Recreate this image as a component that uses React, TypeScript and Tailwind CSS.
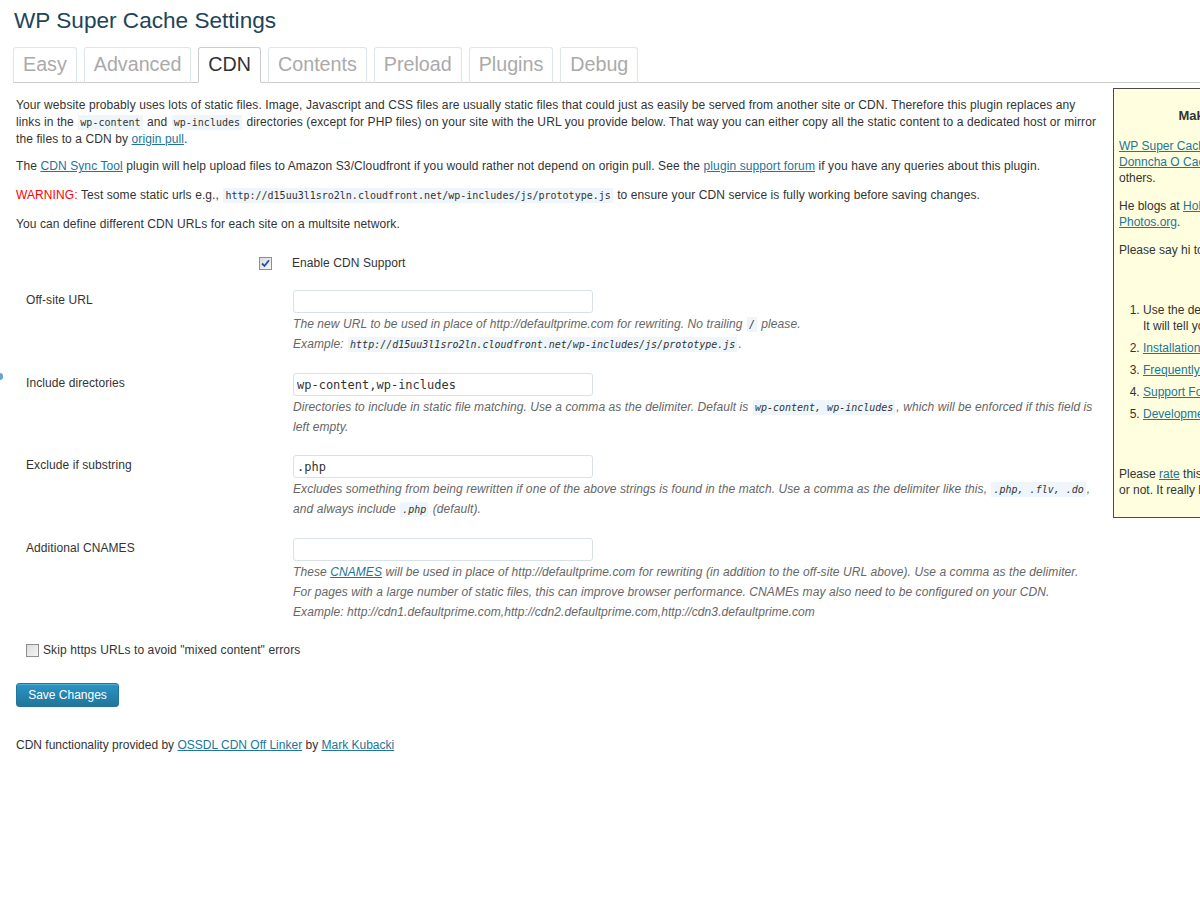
import React from "react";

const Code = ({ children, italic = false }: { children: React.ReactNode; italic?: boolean }) => (
  <code
    className={`font-['DejaVu_Sans_Mono','Liberation_Mono',monospace] text-[10px] leading-[10px] tracking-normal bg-[#eef6fb] px-[2px] py-[2px] mx-[1px] text-[#333] ${italic ? "italic" : ""}`}
  >
    {children}
  </code>
);

const A = ({ children }: { children: React.ReactNode }) => (
  <a href="#" className="text-[#21759b] underline">
    {children}
  </a>
);

const Check = ({ checked }: { checked: boolean }) => (
  <span className="inline-flex w-[13px] h-[13px] border border-[#8e8f8f] bg-gradient-to-br from-[#dcdcdc] to-[#f6f6f6] items-center justify-center shrink-0">
    {checked && (
      <svg width="9" height="9" viewBox="0 0 9 9">
        <path d="M1 4.5 L3.5 7 L8 1.2" fill="none" stroke="#2a4fa8" strokeWidth="1.8" />
      </svg>
    )}
  </span>
);

const tabs = ["Easy", "Advanced", "CDN", "Contents", "Preload", "Plugins", "Debug"];

const inputCls =
  "block w-[300px] h-[23px] border border-[#d6e1e9] rounded-[3px] px-[3px] bg-white text-[12px] tracking-normal text-[#333] font-['DejaVu_Sans_Mono','Liberation_Mono',monospace] outline-none";

export default function App() {
  return (
    <div className="relative w-[1200px] h-[900px] overflow-hidden bg-white text-[12px] text-[#333] font-['Liberation_Sans',Arial,sans-serif]">
      <span className="absolute left-[-3px] top-[373px] w-[6px] h-[7px] rounded-full bg-[#6aa3cf]" />
      <div className="pl-[14px] pt-[6px]">
        <h2 className="text-[22.6px] leading-[29px] text-[#214459]">WP Super Cache Settings</h2>
      </div>
      <div className="mt-[12px] ml-[13px] flex gap-[7px] border-b border-[#cccccc]">
        {tabs.map((t) => (
          <div
            key={t}
            className={`-mb-px px-[9px] pt-[4px] pb-[6px] text-[19.7px] leading-[24px] border rounded-t-[3px] ${
              t === "CDN"
                ? "text-[#333] border-[#cccccc] border-b-white bg-white"
                : "text-[#aaaaaa] border-[#dbe6ee] border-b-[#cccccc]"
            }`}
          >
            {t}
          </div>
        ))}
      </div>

      <div className="flex pl-[16px]">
        <div className="w-[1087px] shrink-0 leading-[17px] tracking-[0.1px]">
          <p className="mt-[14px]">
            Your website probably uses lots of static files. Image, Javascript and CSS files are usually static files that
            could just as easily be served from another site or CDN. Therefore this plugin replaces any links in the{" "}
            <Code>wp-content</Code> and <Code>wp-includes</Code> directories (except for PHP files) on your site with the URL
            you provide below. That way you can either copy all the static content to a dedicated host or mirror the files to
            a CDN by <A>origin pull</A>.
          </p>
          <p className="mt-[10px]">
            The <A>CDN Sync Tool</A> plugin will help upload files to Amazon S3/Cloudfront if you would rather not depend on
            origin pull. See the <A>plugin support forum</A> if you have any queries about this plugin.
          </p>
          <p className="mt-[12px]">
            <span className="text-[#ff0000]">WARNING:</span> Test some static urls e.g.,{" "}
            <Code>http://d15uu3l1sro2ln.cloudfront.net/wp-includes/js/prototype.js</Code> to ensure your CDN service is fully
            working before saving changes.
          </p>
          <p className="mt-[12px]">You can define different CDN URLs for each site on a multsite network.</p>

          <div className="mt-[13px] tracking-[0.08px]">
            <div className="flex h-[34px] items-center">
              <div className="w-[267px] flex justify-end pr-[11px]">
                <Check checked />
              </div>
              <div className="pl-[9px] leading-[16px]">Enable CDN Support</div>
            </div>

            <div className="flex">
              <div className="w-[267px] pl-[10px] pt-[11px] leading-[18px]">Off-site URL</div>
              <div className="pl-[10px] pt-[10px] pb-[10px]">
                <input className={inputCls} readOnly defaultValue="" />
                <div className="mt-[1px] italic text-[#666] leading-[20px]">
                  The new URL to be used in place of http://defaultprime.com for rewriting. No trailing <Code>/</Code> please.
                  <br />
                  Example: <Code italic>http://d15uu3l1sro2ln.cloudfront.net/wp-includes/js/prototype.js</Code>.
                </div>
              </div>
            </div>

            <div className="flex">
              <div className="w-[267px] pl-[10px] pt-[10px] leading-[18px]">Include directories</div>
              <div className="pl-[10px] pt-[9px] pb-[9px] w-[820px]">
                <input className={inputCls} readOnly defaultValue="wp-content,wp-includes" />
                <div className="mt-[1px] italic text-[#666] leading-[20px]">
                  Directories to include in static file matching. Use a comma as the delimiter. Default is{" "}
                  <Code italic>wp-content, wp-includes</Code>, which will be enforced if this field is left empty.
                </div>
              </div>
            </div>

            <div className="flex">
              <div className="w-[267px] pl-[10px] pt-[10px] leading-[18px]">Exclude if substring</div>
              <div className="pl-[10px] pt-[9px] pb-[9px] w-[820px]">
                <input className={inputCls} readOnly defaultValue=".php" />
                <div className="mt-[1px] italic text-[#666] leading-[20px]">
                  Excludes something from being rewritten if one of the above strings is found in the match. Use a comma as
                  the delimiter like this, <Code italic>.php, .flv, .do</Code>, and always include <Code italic>.php</Code>{" "}
                  (default).
                </div>
              </div>
            </div>

            <div className="flex">
              <div className="w-[267px] pl-[10px] pt-[11px] leading-[18px]">Additional CNAMES</div>
              <div className="pl-[10px] pt-[10px] pb-[10px] w-[820px]">
                <input className={inputCls} readOnly defaultValue="" />
                <div className="mt-[1px] italic text-[#666] leading-[20px]">
                  These <A>CNAMES</A> will be used in place of http://defaultprime.com for rewriting (in addition to the
                  off-site URL above). Use a comma as the delimiter.
                  <br />
                  For pages with a large number of static files, this can improve browser performance. CNAMEs may also need to
                  be configured on your CDN.
                  <br />
                  Example: http://cdn1.defaultprime.com,http://cdn2.defaultprime.com,http://cdn3.defaultprime.com
                </div>
              </div>
            </div>
          </div>

          <div className="mt-[10px] pl-[10px] flex items-center gap-[4px] leading-[16px]">
            <Check checked={false} />
            <span>Skip https URLs to avoid "mixed content" errors</span>
          </div>

          <button className="mt-[25px] h-[24px] w-[103px] rounded-[3px] border border-[#21759b] bg-gradient-to-b from-[#2a95c5] to-[#21759b] text-white text-[12px] leading-[22px] tracking-normal shadow-[inset_0_1px_0_rgba(120,200,230,0.5)]">
            Save Changes
          </button>

          <p className="mt-[30px] tracking-normal">
            CDN functionality provided by <A>OSSDL CDN Off Linker</A> by <A>Mark Kubacki</A>
          </p>
        </div>

        <div className="ml-[10px] mt-[5px] w-[278px] shrink-0 self-start border border-[#4a4a4a] bg-[#ffffe0] p-[5px] leading-[16px] whitespace-nowrap">
          <h3 className="mt-[14px] text-center font-bold text-[13px] leading-[16px] text-[#333]">Make WordPress Faster</h3>
          <p className="mt-[14px]">
            <A>WP Super Cache</A> is maintained and developed by
            <br />
            <A>Donncha O Caoimh</A> with contributions from many
            <br />
            others.
          </p>
          <p className="mt-[12px]">
            He blogs at <A>Holy Shmoly</A> and posts photos at <A>In</A>
            <br />
            <A>Photos.org</A>.
          </p>
          <p className="mt-[12px]">Please say hi to him on Twitter too!</p>
          <h3 className="mt-[14px] text-center font-bold text-[13px] leading-[16px]">Need Help?</h3>
          <ol className="mt-[14px] list-decimal pl-[24px]">
            <li>
              Use the debug system in the Debug tab above.
              <br />
              It will tell you what the plugin is doing.
            </li>
            <li className="mt-[6px]">
              <A>Installation Help</A>
            </li>
            <li className="mt-[6px]">
              <A>Frequently Asked Questions</A>
            </li>
            <li className="mt-[6px]">
              <A>Support Forum</A>
            </li>
            <li className="mt-[6px]">
              <A>Development Version</A>
            </li>
          </ol>
          <h3 className="mt-[14px] text-center font-bold text-[13px] leading-[16px]">Rate This Plugin</h3>
          <p className="mt-[14px] mb-[14px]">
            Please <A>rate</A> this plugin and tell me if it works for you
            <br />
            or not. It really helps development.
          </p>
        </div>
      </div>
    </div>
  );
}
